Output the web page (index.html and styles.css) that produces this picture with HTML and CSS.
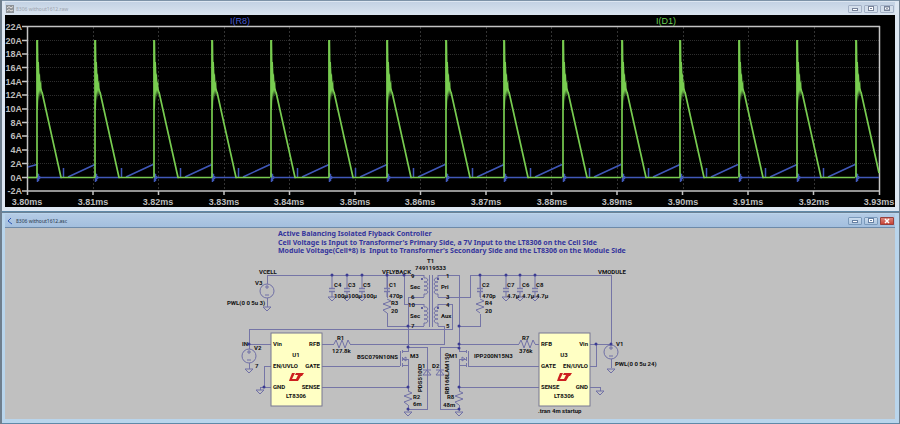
FILE: index.html
```html
<!DOCTYPE html>
<html lang="en">
<head>
    <meta charset="UTF-8">
    <meta name="viewport" content="width=device-width, initial-scale=1.0">
    <title>8306 without1612</title>
    <link rel="stylesheet" href="styles.css">
</head>
<body>
    <section class="window inactive">
        <header class="titlebar">
            <svg class="title-icon" viewBox="0 0 8 8"><rect x="0" y="0" width="8" height="8" fill="#8d9297"/><path d="M1 3 L3 1.500 L5 3 L7 1.500 M1 6 L3 4.500 L5 6 L7 5" fill="none" stroke="#e8e4e2"/></svg>
            <span class="title">8306 without1612.raw</span>
            <button type="button" class="control" aria-label="Minimize"><svg viewBox="0 0 14 8"><rect x="4.500" y="3.500" width="5" height="2" fill="#fff" stroke="#77839a"/></svg></button>
            <button type="button" class="control" aria-label="Maximize"><svg viewBox="0 0 14 8"><rect x="4.500" y="1.500" width="5" height="4" fill="#fff" stroke="#77839a"/><path d="M6 3.500h2" stroke="#77839a"/></svg></button>
            <button type="button" class="control" aria-label="Close"><svg viewBox="0 0 14 8"><rect x="4.500" y="1.500" width="5" height="4" fill="#fff" stroke="#77839a"/><path d="M5.500 2l3 3m0-3l-3 3" stroke="#77839a"/></svg></button>
        </header>
        <svg class="plot" viewBox="5 15 890 192">
            <defs>
                <g id="blue-wave">
                    <path d="M0 177.500H25M26.500 168V177.500M31 177L58 164.500"/>
                    <path d="M0.500 173V182M1.500 174V181M2.500 176V179"/>
                </g>
                <g id="green-wave">
                    <path d="M0 177.500V40M5 92L24 177.500H58"/>
                    <path class="ringing" d="M-0.500 40H1.200L1.500 62H2L2.500 75L3 73L3.500 83L4.200 80L4.600 88L5.800 93L4.500 92L4 96L3.500 90L3 97L2.500 90L2 101L1.500 92L1 108L0 110Z"/>
                </g>
            </defs>

            <path class="grid" d="M28 40.500H879M28 54.500H879M28 67.500H879M28 81.500H879M28 95.500H879M28 109.500H879M28 122.500H879M28 136.500H879M28 150.500H879M28 163.500H879"/>
            <path class="grid grid-vertical" d="M93.500 27V191M158.500 27V191M224.500 27V191M289.500 27V191M355.500 27V191M420.500 27V191M486.500 27V191M551.500 27V191M617.500 27V191M683.500 27V191M748.500 27V191M814.500 27V191"/>

            <path class="axis" d="M22 26.500H880M27.500 26V195M879.500 26V195M22 191H880M22 40.500H28M22 54H28M22 67.500H28M22 81.500H28M22 95H28M22 109H28M22 122.500H28M22 136H28M22 150H28M22 163.500H28M22 177.500H28M93 191V195M158.500 191V195M224 191V195M289.500 191V195M355 191V195M420.500 191V195M486 191V195M551.500 191V195M617 191V195M682.500 191V195M748 191V195M813.500 191V195"/>

            <g class="blue-trace">
                <path d="M28 167L37 164.500"/>
                <use href="#blue-wave" x="37"/><use href="#blue-wave" x="95"/><use href="#blue-wave" x="154"/>
                <use href="#blue-wave" x="212"/><use href="#blue-wave" x="271"/><use href="#blue-wave" x="329"/>
                <use href="#blue-wave" x="387"/><use href="#blue-wave" x="446"/><use href="#blue-wave" x="504"/>
                <use href="#blue-wave" x="563"/><use href="#blue-wave" x="622"/><use href="#blue-wave" x="680"/>
                <use href="#blue-wave" x="739"/><use href="#blue-wave" x="797"/>
                <path d="M856 177.500H879M856.500 173V182M857.500 174V181M858.500 176V179"/>
            </g>
            <g class="green-trace">
                <path d="M28 177.500H37"/>
                <use href="#green-wave" x="37"/><use href="#green-wave" x="95"/><use href="#green-wave" x="154"/>
                <use href="#green-wave" x="212"/><use href="#green-wave" x="271"/><use href="#green-wave" x="329"/>
                <use href="#green-wave" x="387"/><use href="#green-wave" x="446"/><use href="#green-wave" x="504"/>
                <use href="#green-wave" x="563"/><use href="#green-wave" x="622"/><use href="#green-wave" x="680"/>
                <use href="#green-wave" x="739"/><use href="#green-wave" x="797"/>
                <path d="M856 177.500V40M861 92L879 173"/>
                <path class="ringing" d="M855.500 40H857.200L857.500 62H858L858.500 75L859 73L859.500 83L860.200 80L860.600 88L861.800 93L860.500 92L860 96L859.500 90L859 97L858.500 90L858 101L857.500 92L857 108L856 110Z"/>
            </g>

            <g class="axis-label y-label">
                <text x="22" y="30">22A</text>
                <text x="22" y="44">20A</text>
                <text x="22" y="57">18A</text>
                <text x="22" y="71">16A</text>
                <text x="22" y="85">14A</text>
                <text x="22" y="98">12A</text>
                <text x="22" y="112">10A</text>
                <text x="22" y="126">8A</text>
                <text x="22" y="139">6A</text>
                <text x="22" y="153">4A</text>
                <text x="22" y="167">2A</text>
                <text x="22" y="181">0A</text>
                <text x="22" y="194">-2A</text>
            </g>
            <g class="axis-label x-label">
                <text x="27" y="205">3.80ms</text>
                <text x="93" y="205">3.81ms</text>
                <text x="158" y="205">3.82ms</text>
                <text x="224" y="205">3.83ms</text>
                <text x="289" y="205">3.84ms</text>
                <text x="355" y="205">3.85ms</text>
                <text x="420" y="205">3.86ms</text>
                <text x="486" y="205">3.87ms</text>
                <text x="552" y="205">3.88ms</text>
                <text x="617" y="205">3.89ms</text>
                <text x="683" y="205">3.90ms</text>
                <text x="748" y="205">3.91ms</text>
                <text x="814" y="205">3.92ms</text>
                <text x="879" y="205">3.93ms</text>
            </g>
            <text class="trace-name blue" x="240" y="24">I(R8)</text>
            <text class="trace-name green" x="666" y="24">I(D1)</text>
        </svg>
    </section>

    <section class="window active">
        <header class="titlebar">
            <svg class="title-icon" viewBox="0 0 8 8"><path d="M5 1L2 4L6 7" fill="none" stroke="#2d55b5"/></svg>
            <span class="title">8306 without1612.asc</span>
            <button type="button" class="control" aria-label="Minimize"><svg viewBox="0 0 14 8"><rect x="4.500" y="3.500" width="5" height="2" fill="#fff" stroke="#6680a3"/></svg></button>
            <button type="button" class="control" aria-label="Maximize"><svg viewBox="0 0 14 8"><rect x="4.500" y="1.500" width="5" height="4" fill="#fff" stroke="#6680a3"/><path d="M6 3.500h2" stroke="#6680a3"/></svg></button>
            <button type="button" class="control close" aria-label="Close"><svg viewBox="0 0 14 8"><path d="M5 2l4 4m0-4l-4 4" stroke="#fff" stroke-width="1.500"/></svg></button>
        </header>
        <svg class="schematic" viewBox="5 228 890 191">
            <defs>
                <path id="ground" d="M-4 0H4L0 4Z"/>
                <g id="source">
                    <circle cx="0" cy="0" r="7"/>
                    <path d="M-2 -4H2M0 -6V-2M-2 4H2"/>
                </g>
                <g id="cap">
                    <path d="M0 0V14M0 16V22"/>
                    <path class="plate" d="M-3 13.500H3M-3 16.500H3"/>
                </g>
                <path id="resistor" d="M0 0L4 2L-4 5L4 8L-4 11L0 14"/>
                <path id="resistor-flat" d="M0 0L2 -4L5 4L8 -4L11 4L14 -4L16 0"/>
                <path id="coil" d="M0 0V3C5 2 5 8 0 7C5 6 5 12 0 11C5 10 5 16 0 15C5 14 5 20 0 19V22"/>
                <circle id="dot" r="1.500"/>
                <path id="lt-logo" fill="#cc1f1f" d="M-4 -4H-1L-4 2H1L0 4H-7L-6 1ZM0 -4H8L6 -1H5L2 4H-1L2 -2H-1Z"/>
            </defs>

            <g class="wires">
                <!-- cell side -->
                <path d="M267 284V275H424M267 298V307M404 275V304H424M408 347V297H424M387 275V298M387 313V326H424"/>
                <path d="M249 349V329H452V304H438M249 344H271M249 363V369M271 366H264V387H271M264 387H260V390"/>
                <path d="M321 344H334M350 344H444V326H438M321 366H400M321 387H408"/>
                <path d="M400 351V366M402 350V353M402 357V361M402 363V367M408 347V351H402M402 359H408V391M402 365H408"/>
                <path d="M408 347H427V409H408M408 405V411"/>
                <!-- module side -->
                <path d="M438 275H459V351H466M438 297H470V275H611V345M480 275V298M480 314V326H459"/>
                <path d="M459 344H519M535 344H539M468 366H539M459 387H539"/>
                <path d="M468 351V366M466 350V353M466 357V361M466 363V367M466 359H459V391M466 365H459"/>
                <path d="M459 347H440V409H459M459 405V411"/>
                <path d="M590 344H611M596 344V366H590M590 387H600V391M611 359V368"/>
                <path d="M429 275V327M432 275V327"/>
            </g>

            <g class="parts">
                <use href="#source" x="267" y="291"/><use href="#source" x="249" y="356"/><use href="#source" x="611" y="352"/>
                <use href="#ground" x="267" y="307"/><use href="#ground" x="249" y="369"/><use href="#ground" x="260" y="390"/>
                <use href="#ground" x="408" y="412"/><use href="#ground" x="459" y="412"/><use href="#ground" x="600" y="391"/><use href="#ground" x="611" y="369"/>
                <use href="#cap" x="332" y="275"/><use href="#cap" x="347" y="275"/><use href="#cap" x="362" y="275"/><use href="#cap" x="387" y="275"/>
                <use href="#cap" x="480" y="275"/><use href="#cap" x="506" y="275"/><use href="#cap" x="520" y="275"/><use href="#cap" x="535" y="275"/>
                <use href="#ground" x="332" y="297"/><use href="#ground" x="347" y="297"/><use href="#ground" x="362" y="297"/>
                <use href="#ground" x="506" y="297"/><use href="#ground" x="520" y="297"/><use href="#ground" x="535" y="297"/>
                <use href="#resistor" x="387" y="299"/><use href="#resistor" x="480" y="299"/><use href="#resistor" x="408" y="391"/><use href="#resistor" x="459" y="391"/>
                <use href="#resistor-flat" x="334" y="344"/><use href="#resistor-flat" x="519" y="344"/>
                <use href="#coil" x="424" y="275"/><use href="#coil" x="424" y="304"/>
                <use href="#coil" transform="translate(438 275) scale(-1 1)"/><use href="#coil" transform="translate(438 304) scale(-1 1)"/>
                <path d="M423 375H431L427 370ZM423 370H431M436 375H444L440 370ZM436 370H444"/>
                <path d="M403 359l3 -2v4zM465 359l-3 -2v4z"/>
            </g>

            <g class="dots">
                <use href="#dot" x="332" y="275"/><use href="#dot" x="347" y="275"/><use href="#dot" x="362" y="275"/><use href="#dot" x="387" y="275"/><use href="#dot" x="404" y="275"/>
                <use href="#dot" x="480" y="275"/><use href="#dot" x="506" y="275"/><use href="#dot" x="520" y="275"/><use href="#dot" x="535" y="275"/>
                <use href="#dot" x="249" y="344"/><use href="#dot" x="264" y="387"/><use href="#dot" x="408" y="326"/><use href="#dot" x="408" y="347"/><use href="#dot" x="408" y="387"/><use href="#dot" x="408" y="409"/>
                <use href="#dot" x="459" y="326"/><use href="#dot" x="459" y="344"/><use href="#dot" x="459" y="348"/><use href="#dot" x="459" y="387"/><use href="#dot" x="459" y="409"/>
                <use href="#dot" x="596" y="344"/><use href="#dot" x="611" y="344"/>
                <circle cx="422" cy="279" r="1"/><circle cx="422" cy="308" r="1"/><circle cx="438" cy="279" r="1"/><circle cx="438" cy="308" r="1"/>
            </g>

            <rect class="chip" x="271" y="333" width="51" height="73"/>
            <rect class="chip" x="539" y="333" width="51" height="73"/>
            <use href="#lt-logo" x="296" y="377"/>
            <use href="#lt-logo" x="564" y="377"/>

            <g class="heading">
                <text x="278" y="236">Active Balancing Isolated Flyback Controller</text>
                <text x="278" y="245">Cell Voltage is Input to Transformer's Primary Side, a 7V Input to the LT8306 on the Cell Side</text>
                <text x="278" y="253">Module Voltage(Cell*8) is&nbsp; Input to Transformer's Secondary Side and the LT8306 on the Module Side</text>
            </g>

            <g class="label">
                <text x="259" y="274">VCELL</text>
                <text x="255" y="285">V3</text>
                <text x="227" y="305">PWL(0 0 5u 3)</text>
                <text x="382" y="274">VFLYBACK</text>
                <text x="334" y="287">C4</text>
                <text x="348" y="287">C3</text>
                <text x="363" y="287">C5</text>
                <text x="389" y="287">C1</text>
                <text x="334" y="298">100µ</text>
                <text x="348" y="298">100µ</text>
                <text x="363" y="298">100µ</text>
                <text x="389" y="298">470p</text>
                <text x="391" y="305">R3</text>
                <text x="391" y="313">20</text>
                <text x="427" y="263">T1</text>
                <text x="415" y="270">749119533</text>
                <text x="411" y="278">9</text>
                <text x="411" y="299">6</text>
                <text x="408" y="307">10</text>
                <text x="411" y="328">7</text>
                <text x="410" y="289">Sec</text>
                <text x="410" y="318">Sec</text>
                <text x="446" y="278">1</text>
                <text x="446" y="299">3</text>
                <text x="446" y="307">4</text>
                <text x="446" y="328">5</text>
                <text x="441" y="289">Pri</text>
                <text x="441" y="318">Aux</text>
                <text x="482" y="287">C2</text>
                <text x="482" y="298">470p</text>
                <text x="485" y="305">R4</text>
                <text x="485" y="313">20</text>
                <text x="507" y="287">C7</text>
                <text x="522" y="287">C6</text>
                <text x="536" y="287">C8</text>
                <text x="507" y="298">4.7µ</text>
                <text x="522" y="298">4.7µ</text>
                <text x="536" y="298">4.7µ</text>
                <text x="598" y="274">VMODULE</text>

                <text x="242" y="346">IN</text>
                <text x="254" y="350">V2</text>
                <text x="255" y="368">7</text>
                <text x="337" y="340">R1</text>
                <text x="332" y="353">127.8k</text>
                <text x="357" y="359">BSC079N10NS</text>
                <text x="410" y="358">M3</text>
                <text x="418" y="368">D1</text>
                <text x="432" y="368">D2</text>
                <text x="449" y="358">M1</text>
                <text x="474" y="358">IPP200N15N3</text>
                <text x="413" y="399">R2</text>
                <text x="413" y="406">6m</text>
                <text x="447" y="399">R8</text>
                <text x="443" y="407">48m</text>
                <text x="522" y="340">R7</text>
                <text x="519" y="353">376k</text>
                <text x="616" y="346">V1</text>
                <text x="615" y="366">PWL(0 0 5u 24)</text>
                <text x="538" y="413">.tran 4m startup</text>
                <text transform="translate(422 392) rotate(-90)">PDS5100</text>
                <text transform="translate(449 394) rotate(-90)">RB168LAM150</text>

                <text x="273" y="346">Vin</text>
                <text x="273" y="368">EN/UVLO</text>
                <text x="273" y="389">GND</text>
                <text x="541" y="346">RFB</text>
                <text x="541" y="368">GATE</text>
                <text x="541" y="389">SENSE</text>
            </g>
            <g class="label pin-right">
                <text x="320" y="346">RFB</text>
                <text x="320" y="368">GATE</text>
                <text x="320" y="389">SENSE</text>
                <text x="588" y="346">Vin</text>
                <text x="588" y="368">EN/UVLO</text>
                <text x="588" y="389">GND</text>
            </g>
            <g class="label chip-name">
                <text x="296" y="357">U1</text>
                <text x="296" y="398">LT8306</text>
                <text x="564" y="357">U3</text>
                <text x="564" y="398">LT8306</text>
            </g>
        </svg>
    </section>
</body>
</html>
```

FILE: styles.css
```css
body {
    margin: 0;
    background-color: #6f7f8e;
    font-family: "Noto Sans", sans-serif;
}
.window {
    margin: 0 1px 0 2px;
    padding: 1px 4px 4px 3px;
    border-top: 1px solid #7d93a8;
    border-bottom: 1px solid #5f89a8;
}
.window.inactive {
    background: #dde7f2;
}
.window.active {
    background: #b9d5ec;
    border-top-color: #6d8295;
}
.titlebar {
    display: flex;
    align-items: center;
    gap: 2px;
    height: 13px;
    padding: 0 1px;
    background: linear-gradient(#c3d2e4, #dae4ef);
}
.active .titlebar {
    background: linear-gradient(#b4cbe5, #a3bfde);
    border-bottom: 1px solid #6d8aa9;
}
.title-icon {
    width: 8px;
    height: 8px;
}
.title {
    flex: 1;
    font-size: 5px;
    line-height: 8px;
    color: #9ba3ad;
}
.active .title {
    color: #27364a;
}
.control {
    display: flex;
    width: 14px;
    height: 8px;
    padding: 0;
    border: 0;
    border-radius: 1px;
    outline: 1px solid #a3b1c6;
    outline-offset: -1px;
    background: #d3deeb;
}
.active .control {
    outline-color: #7b9abb;
    background: linear-gradient(#cfdff0, #a9c2dc);
}
.active .control.close {
    outline-color: #96403c;
    background: linear-gradient(#dd8f85, #c6392b);
}
.control svg {
    width: 100%;
    height: 100%;
    fill: none;
}
.plot,
.schematic {
    display: block;
    width: 100%;
}

/* waveform pane */
.plot {
    background: #000;
}
.grid {
    fill: none;
    stroke: #2e2e2e;
    stroke-dasharray: 1 1;
}
.grid-vertical {
    stroke: #333;
    stroke-dasharray: 2 2;
}
.axis {
    fill: none;
    stroke: #c4c4c4;
    stroke-width: 1.5;
}
.blue-trace {
    fill: none;
    stroke: #4058b8;
    stroke-width: 1.5;
}
.green-trace {
    fill: none;
    stroke: #78cc50;
    stroke-width: 1.7;
}
.ringing {
    fill: #78cc50;
    stroke: none;
}
.axis-label,
.trace-name {
    font: bold 9px "Liberation Sans", Arial, sans-serif;
    fill: #bdbdbd;
}
.y-label {
    text-anchor: end;
}
.x-label,
.trace-name {
    text-anchor: middle;
}
.trace-name {
    font-weight: normal;
}
.trace-name.blue {
    fill: #4a5cd0;
}
.trace-name.green {
    fill: #6bcf52;
}

/* schematic pane */
.schematic {
    background: #c0c0c0;
}
.wires {
    fill: none;
    stroke: #7575a6;
    shape-rendering: crispEdges;
}
.parts {
    fill: none;
    stroke: #7070a6;
}
.plate {
    stroke: #7777a8;
    stroke-width: 1.5;
}
.dots {
    fill: #3b3b92;
}
.chip {
    fill: #ffffc4;
    stroke: #777792;
}
.heading {
    font-size: 7px;
    font-weight: bold;
    fill: #34349c;
}
.label {
    font-family: Roboto, sans-serif;
    font-size: 6px;
    font-weight: bold;
    fill: #111;
}
.pin-right {
    text-anchor: end;
}
.chip-name {
    text-anchor: middle;
}
```
